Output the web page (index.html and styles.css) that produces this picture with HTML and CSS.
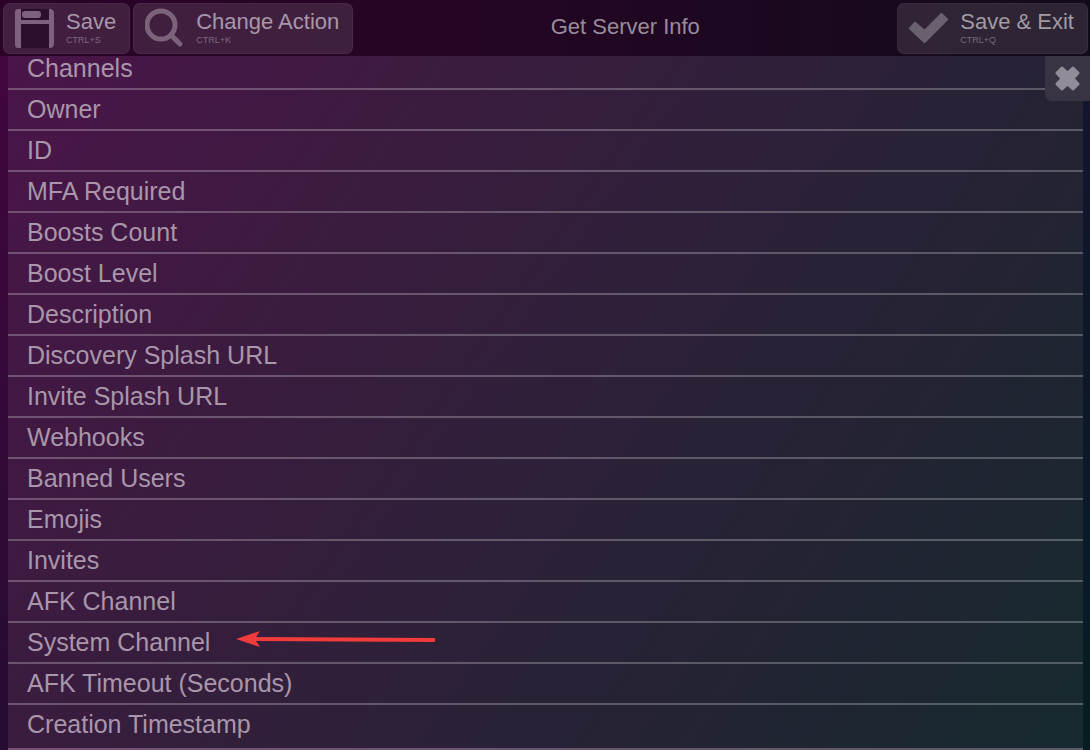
FILE: index.html
```html
<!DOCTYPE html>
<html lang="en">
<head>
    <meta charset="UTF-8">
    <meta name="viewport" content="width=device-width, initial-scale=1.0">
    <title>Get Server Info</title>
    <link rel="stylesheet" href="styles.css">
</head>
<body>
    <header class="topbar">
        <div class="actions">
            <button class="action" type="button">
                <svg class="icon" viewBox="0 0 40 40" aria-hidden="true">
                    <rect y="1" width="39" height="39" rx="3" fill="#2b0f2b"/>
                    <path fill="#80607f" d="M3 1h3v11h28V1h1q4 0 4 4v31q0 4-4 4h-1V16H6v24H3q-3 0-3-3V4q0-3 3-3z"/>
                    <rect x="7" y="3" width="19" height="7" rx="3" fill="#80607f"/>
                </svg>
                <span class="labels">
                    <span class="label">Save</span>
                    <span class="keys">CTRL+S</span>
                </span>
            </button>
            <button class="action" type="button">
                <svg class="icon" viewBox="0 0 40 40" aria-hidden="true">
                    <circle cx="16" cy="17" r="14" fill="none" stroke="#7d627b" stroke-width="5"/>
                    <path d="M26 27l9 9" fill="none" stroke="#7d627b" stroke-width="5" stroke-linecap="round"/>
                </svg>
                <span class="labels">
                    <span class="label">Change Action</span>
                    <span class="keys">CTRL+K</span>
                </span>
            </button>
        </div>
        <h1 class="title">Get Server Info</h1>
        <div class="actions actions-right">
            <button class="action" type="button">
                <svg class="icon" viewBox="0 0 40 40" aria-hidden="true">
                    <path fill="#6a616e" stroke="#6a616e" stroke-width="3" stroke-linejoin="round" d="M1.500 20.500L6 15.500l9.500 8L32.500 6.500l5 5-22 22z"/>
                </svg>
                <span class="labels">
                    <span class="label">Save &amp; Exit</span>
                    <span class="keys">CTRL+Q</span>
                </span>
            </button>
        </div>
    </header>

    <main class="content">
        <button class="close" type="button" aria-label="Close">
            <svg class="close-icon" viewBox="0 0 25 25" aria-hidden="true">
                <path fill="#918c97" stroke="#918c97" stroke-width="3" stroke-linejoin="round" d="M7 2l5.500 5L18 2l5 5-5 5.500 5 5.500-5 5-5.500-5L7 23l-5-5 5-5.500L2 7z"/>
            </svg>
        </button>
        <ul class="options">
            <li class="option">Channels</li>
            <li class="option">Owner</li>
            <li class="option">ID</li>
            <li class="option">MFA Required</li>
            <li class="option">Boosts Count</li>
            <li class="option">Boost Level</li>
            <li class="option">Description</li>
            <li class="option">Discovery Splash URL</li>
            <li class="option">Invite Splash URL</li>
            <li class="option">Webhooks</li>
            <li class="option">Banned Users</li>
            <li class="option">Emojis</li>
            <li class="option">Invites</li>
            <li class="option">AFK Channel</li>
            <li class="option">System Channel
                <svg class="arrow" viewBox="0 0 200 18" aria-hidden="true">
                    <path fill="#f23b3b" d="M0 8L24 0l-4 6 179 1v4L20 10l4 6z"/>
                </svg>
            </li>
            <li class="option">AFK Timeout (Seconds)</li>
            <li class="option">Creation Timestamp</li>
        </ul>
    </main>
</body>
</html>
```
FILE: styles.css
```css
* {
    box-sizing: border-box;
}

body {
    margin: 0;
    height: 100vh;
    display: flex;
    flex-direction: column;
    overflow: hidden;
    font-family: "Liberation Sans", Arial, sans-serif;
    color: #a996ab;
    background: linear-gradient(135deg, #44063f 0%, #2a0b33 35%, #151430 62%, #061d24 100%);
}

button {
    font-family: inherit;
    color: inherit;
    border: none;
    cursor: pointer;
}

.topbar {
    display: flex;
    justify-content: space-between;
    align-items: flex-start;
    flex: none;
    height: 56px;
    padding: 3px 2px 0 3px;
    background: linear-gradient(90deg, #2b0329, #260524 40%, #1b0820 70%, #130a1c);
}

.actions {
    display: flex;
    gap: 3px;
}

.actions-right {
    color: #a19ba4;
}

.action {
    display: flex;
    align-items: center;
    gap: 11px;
    height: 51px;
    padding: 0 13px 1px 11px;
    border: 1px solid rgba(255, 255, 255, 0.05);
    border-radius: 7px;
    background: rgba(255, 255, 255, 0.11);
}

.icon {
    width: 40px;
    height: 40px;
}

.labels {
    display: flex;
    flex-direction: column;
    text-align: left;
}

.label {
    font-size: 22px;
    line-height: 24px;
}

.keys {
    font-size: 9px;
    line-height: 12px;
    opacity: 0.6;
}

.title {
    margin: 0;
    font-size: 22px;
    line-height: 48px;
    font-weight: normal;
    color: #9a8b9b;
}

.content {
    position: relative;
    flex: 1;
    min-height: 0;
    padding: 0 7px 0 8px;
    overflow: hidden;
}

.options {
    margin: 0;
    padding: 0 0 2px;
    list-style: none;
    border-bottom: 2px solid rgba(255, 255, 255, 0.25);
    background: linear-gradient(125deg, #4a1549 0%, #3c1b40 27%, #30203a 48%, #242334 72%, #162a2e 100%);
}

.option {
    display: flex;
    align-items: center;
    height: 41px;
    padding: 0 19px;
    font-size: 25px;
    line-height: 23px;
    border-bottom: 2px solid rgba(255, 255, 255, 0.25);
}

/* the list is scrolled, so the first row is cut by the top bar */
.option:first-child {
    height: 34px;
    padding-bottom: 7px;
}

.option:last-child {
    border-bottom-color: transparent;
}

.arrow {
    width: 200px;
    height: 18px;
    margin: 0 0 6px 26px;
}

.close {
    position: absolute;
    top: 0;
    right: 0;
    display: flex;
    align-items: center;
    justify-content: center;
    width: 45px;
    height: 45px;
    padding: 0;
    border-radius: 0 0 0 7px;
    background: #383443;
}

.close-icon {
    width: 25px;
    height: 25px;
}
```
